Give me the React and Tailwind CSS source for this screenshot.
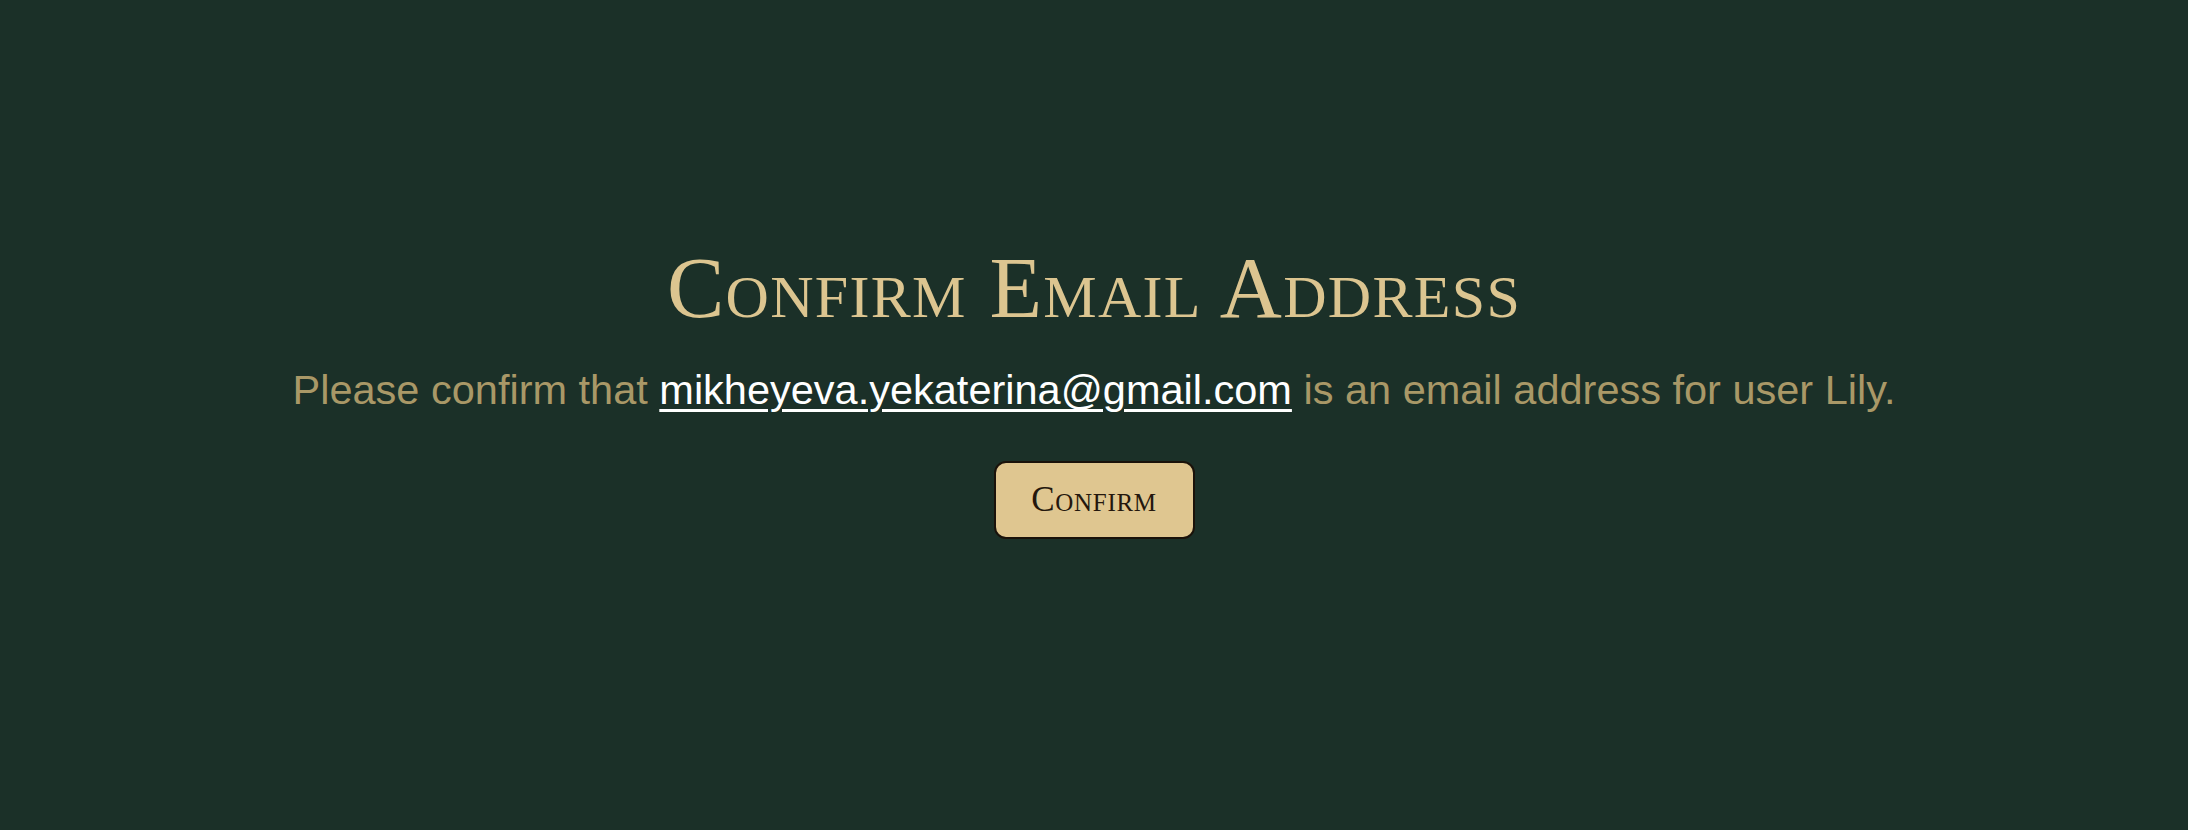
export default function App() {
  return (
    <div className="min-h-screen w-full bg-[#1b3028] flex flex-col items-center justify-center pb-[46px]">
      <h1 className="font-['Liberation_Serif',serif] [font-variant:small-caps] text-[86px] leading-none text-[#dcc590] tracking-[0.015em]">
        Confirm Email Address
      </h1>
      <p className="mt-[38px] font-['Liberation_Sans',Arial,sans-serif] text-[41.5px] leading-none text-[#a99867]">
        Please confirm that{' '}
        <a href="#" className="text-white underline decoration-[3px] underline-offset-[5px]">
          mikheyeva.yekaterina@gmail.com
        </a>{' '}
        is an email address for user Lily.
      </p>
      <button className="mt-[50px] w-[201px] h-[78px] rounded-[12px] bg-[#dfc690] border-2 border-[#1a120a] text-[#24170d] text-[35px] tracking-[0.02em] font-['Liberation_Serif',serif] [font-variant:small-caps]">
        Confirm
      </button>
    </div>
  );
}
